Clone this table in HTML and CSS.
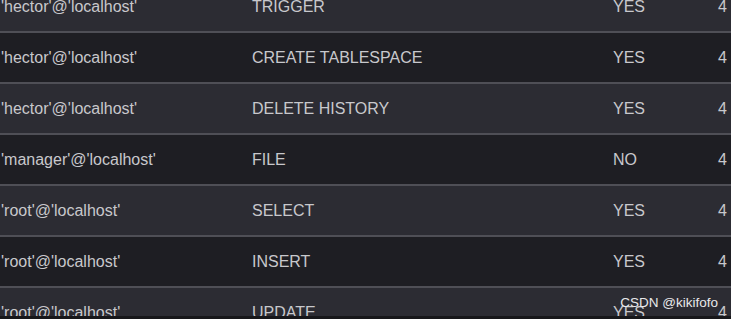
FILE: index.html
```html
<!DOCTYPE html>
<html lang="en">
<head>
  <meta charset="UTF-8">
  <meta name="viewport" content="width=device-width, initial-scale=1.0">
  <title>User Privileges</title>
  <link rel="stylesheet" href="styles.css">
</head>
<body>
  <div class="grid-wrap">
    <div class="priv-table">
      <div class="row light"><span>'hector'@'localhost'</span><span>TRIGGER</span><span>YES</span><span class="num">4</span></div>
      <div class="row dark"><span>'hector'@'localhost'</span><span>CREATE TABLESPACE</span><span>YES</span><span class="num">4</span></div>
      <div class="row light"><span>'hector'@'localhost'</span><span>DELETE HISTORY</span><span>YES</span><span class="num">4</span></div>
      <div class="row dark"><span>'manager'@'localhost'</span><span>FILE</span><span>NO</span><span class="num">4</span></div>
      <div class="row light"><span>'root'@'localhost'</span><span>SELECT</span><span>YES</span><span class="num">4</span></div>
      <div class="row dark"><span>'root'@'localhost'</span><span>INSERT</span><span>YES</span><span class="num">4</span></div>
      <div class="row light"><span>'root'@'localhost'</span><span>UPDATE</span><span>YES</span><span class="num">4</span></div>
    </div>
    <div class="watermark">CSDN @kikifofo</div>
  </div>
</body>
</html>
```

FILE: styles.css
```css
html, body {
  margin: 0;
  height: 100%;
  background-color: #1e1e23;
}
body {
  font-family: "Liberation Sans", Arial, sans-serif;
  overflow: hidden;
}
.grid-wrap {
  position: relative;
  height: 316px;
  overflow: hidden;
  border-bottom: 3px solid #17171a;
}
.priv-table {
  margin-top: -18px;
}
.row {
  display: grid;
  grid-template-columns: 251px 361px 1fr auto;
  align-items: center;
  height: 49px;
  border-bottom: 2px solid #4f4f56;
  padding: 0 4px 0 1px;
  font-size: 16px;
  color: #c8c8cc;
}
.row.light {
  background-color: #2c2c33;
}
.row.dark {
  background-color: #1e1e23;
}
.row .num {
  text-align: right;
}
.watermark {
  position: absolute;
  right: 13px;
  bottom: 6px;
  font-size: 13.5px;
  color: #e8e8ea;
}
```
